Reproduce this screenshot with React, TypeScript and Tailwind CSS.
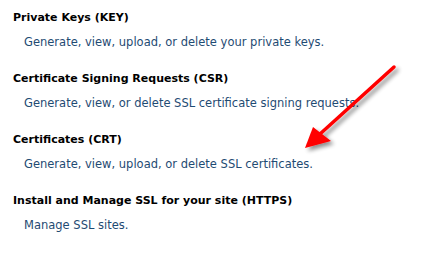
const sections = [
  { title: 'Private Keys (KEY)', desc: 'Generate, view, upload, or delete your private keys.' },
  { title: 'Certificate Signing Requests (CSR)', desc: 'Generate, view, or delete SSL certificate signing requests.' },
  { title: 'Certificates (CRT)', desc: 'Generate, view, upload, or delete SSL certificates.' },
  { title: 'Install and Manage SSL for your site (HTTPS)', desc: 'Manage SSL sites.' },
]

function Arrow() {
  return (
    <svg className="absolute left-0 top-0 pointer-events-none" width="422" height="255" viewBox="0 0 422 255">
      <defs>
        <filter id="sh" x="-20%" y="-20%" width="140%" height="140%">
          <feGaussianBlur in="SourceAlpha" stdDeviation="2" />
          <feOffset dx="3" dy="3" result="b" />
          <feComponentTransfer>
            <feFuncA type="linear" slope="0.45" />
          </feComponentTransfer>
          <feMerge>
            <feMergeNode />
            <feMergeNode in="SourceGraphic" />
          </feMerge>
        </filter>
      </defs>
      <g filter="url(#sh)">
        <line x1="394" y1="67" x2="320" y2="134" stroke="#ff0000" strokeWidth="3.5" strokeLinecap="round" />
        <polygon points="305,148 313,127 331,141" fill="#ff0000" />
      </g>
    </svg>
  )
}

export default function App() {
  return (
    <div className="relative w-[422px] h-[255px] bg-white overflow-hidden" style={{ fontFamily: '"DejaVu Sans", Verdana, sans-serif' }}>
      <div className="flex flex-col pt-[10px] pl-[13px]">
        {sections.map((s) => (
          <div key={s.title} className="h-[61px]">
            <div className="text-[11px] font-bold text-[#000] leading-[15px]">{s.title}</div>
            <div className="text-[11.5px] text-[#1f4b73] leading-[14px] mt-[10px] pl-[11px]">{s.desc}</div>
          </div>
        ))}
      </div>
      <Arrow />
    </div>
  )
}
